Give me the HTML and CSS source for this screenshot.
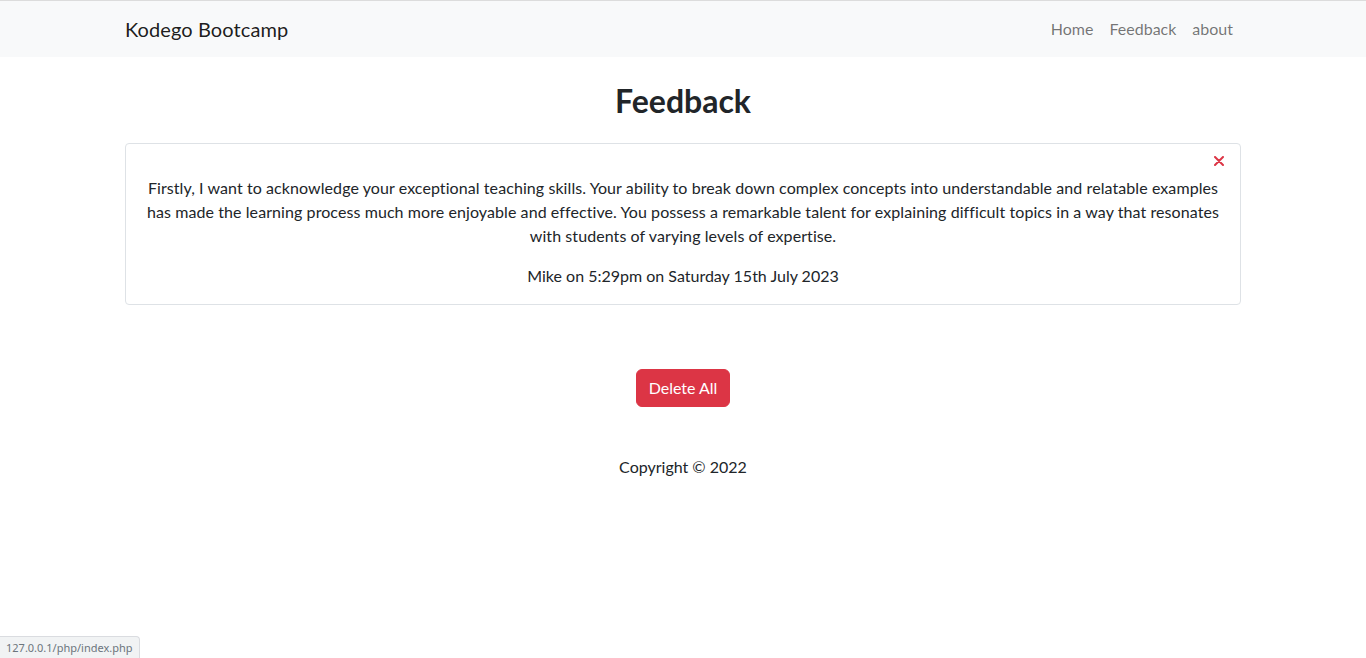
FILE: index.html
```html
<!DOCTYPE html>
<html lang="en">
<head>
<meta charset="utf-8">
<title>Feedback</title>
<link rel="stylesheet" href="styles.css">
</head>
<body>
<nav class="navbar">
  <div class="container nav-inner">
    <a class="brand" href="#">Kodego Bootcamp</a>
    <ul class="nav-links">
      <li><a href="#">Home</a></li>
      <li><a href="#">Feedback</a></li>
      <li><a href="#">about</a></li>
    </ul>
  </div>
</nav>
<main class="container main">
  <h2 class="title">Feedback</h2>
  <div class="card">
    <div class="close-row">
      <svg class="close-icon" width="10" height="10" viewBox="0 0 10 10"><path d="M1 1 L9 9 M9 1 L1 9" stroke="#dc3545" stroke-width="2" stroke-linecap="round"/></svg>
    </div>
    <p class="message">Firstly, I want to acknowledge your exceptional teaching skills. Your ability to break down complex concepts into understandable and relatable examples has made the learning process much more enjoyable and effective. You possess a remarkable talent for explaining difficult topics in a way that resonates with students of varying levels of expertise.</p>
    <p class="meta">Mike on 5:29pm on Saturday 15th July 2023</p>
  </div>
  <div class="actions">
    <button class="btn-danger">Delete All</button>
  </div>
  <footer class="footer">Copyright © 2022</footer>
</main>
<div class="status">127.0.0.1/php/index.php</div>
</body>
</html>
```
FILE: styles.css
```css
* { box-sizing: border-box; }
body {
  margin: 0;
  font-family: Lato, "Noto Sans", sans-serif;
  font-size: 16px;
  line-height: 24px;
  color: #212529;
  background: #fff;
}
.container {
  width: 1140px;
  margin: 0 auto;
  padding: 0 12px;
}
.navbar {
  background: #f8f9fa;
  border-top: 1px solid #dcdcdc;
  height: 57px;
}
.nav-inner {
  display: flex;
  align-items: center;
  justify-content: space-between;
  height: 56px;
}
.brand {
  font-size: 20px;
  line-height: 30px;
  color: rgba(0,0,0,.9);
  text-decoration: none;
  letter-spacing: 0.1px;
}
.nav-links {
  list-style: none;
  margin: 0;
  padding: 0;
  display: flex;
}
.nav-links a {
  display: block;
  padding: 8px;
  color: rgba(0,0,0,.55);
  text-decoration: none;
}
.main {
  display: flex;
  flex-direction: column;
}
.title {
  margin: 22px 0 20px;
  text-align: center;
  font-size: 32px;
  line-height: 44px;
  font-weight: 700;
}
.card {
  border: 1px solid #dee2e6;
  border-radius: 4px;
  padding: 7px 16px 16px;
  text-align: center;
}
.close-row {
  display: flex;
  justify-content: flex-end;
  height: 18px;
  align-items: center;
  padding-right: 0;
}
.close-icon { display: block; margin-top: 1px; }
.message {
  margin: 7px 0 16px;
  letter-spacing: 0.08px;
}
.meta { margin: 0; }
.actions {
  display: flex;
  justify-content: center;
  margin-top: 64px;
}
.btn-danger {
  font: inherit;
  color: #fff;
  background: #dc3545;
  border: 1px solid #dc3545;
  border-radius: 6px;
  padding: 6px 12px;
  line-height: 24px;
}
.footer {
  text-align: center;
  margin-top: 48px;
}
.status {
  position: fixed;
  left: 0;
  bottom: 0;
  height: 22px;
  padding: 0 6px;
  background: #f1f3f4;
  border: 1px solid #dadce0;
  border-left: none;
  border-bottom: none;
  border-top-right-radius: 4px;
  font-family: "Noto Sans", sans-serif;
  font-size: 11px;
  line-height: 21px;
  color: #6c757d;
}
```
